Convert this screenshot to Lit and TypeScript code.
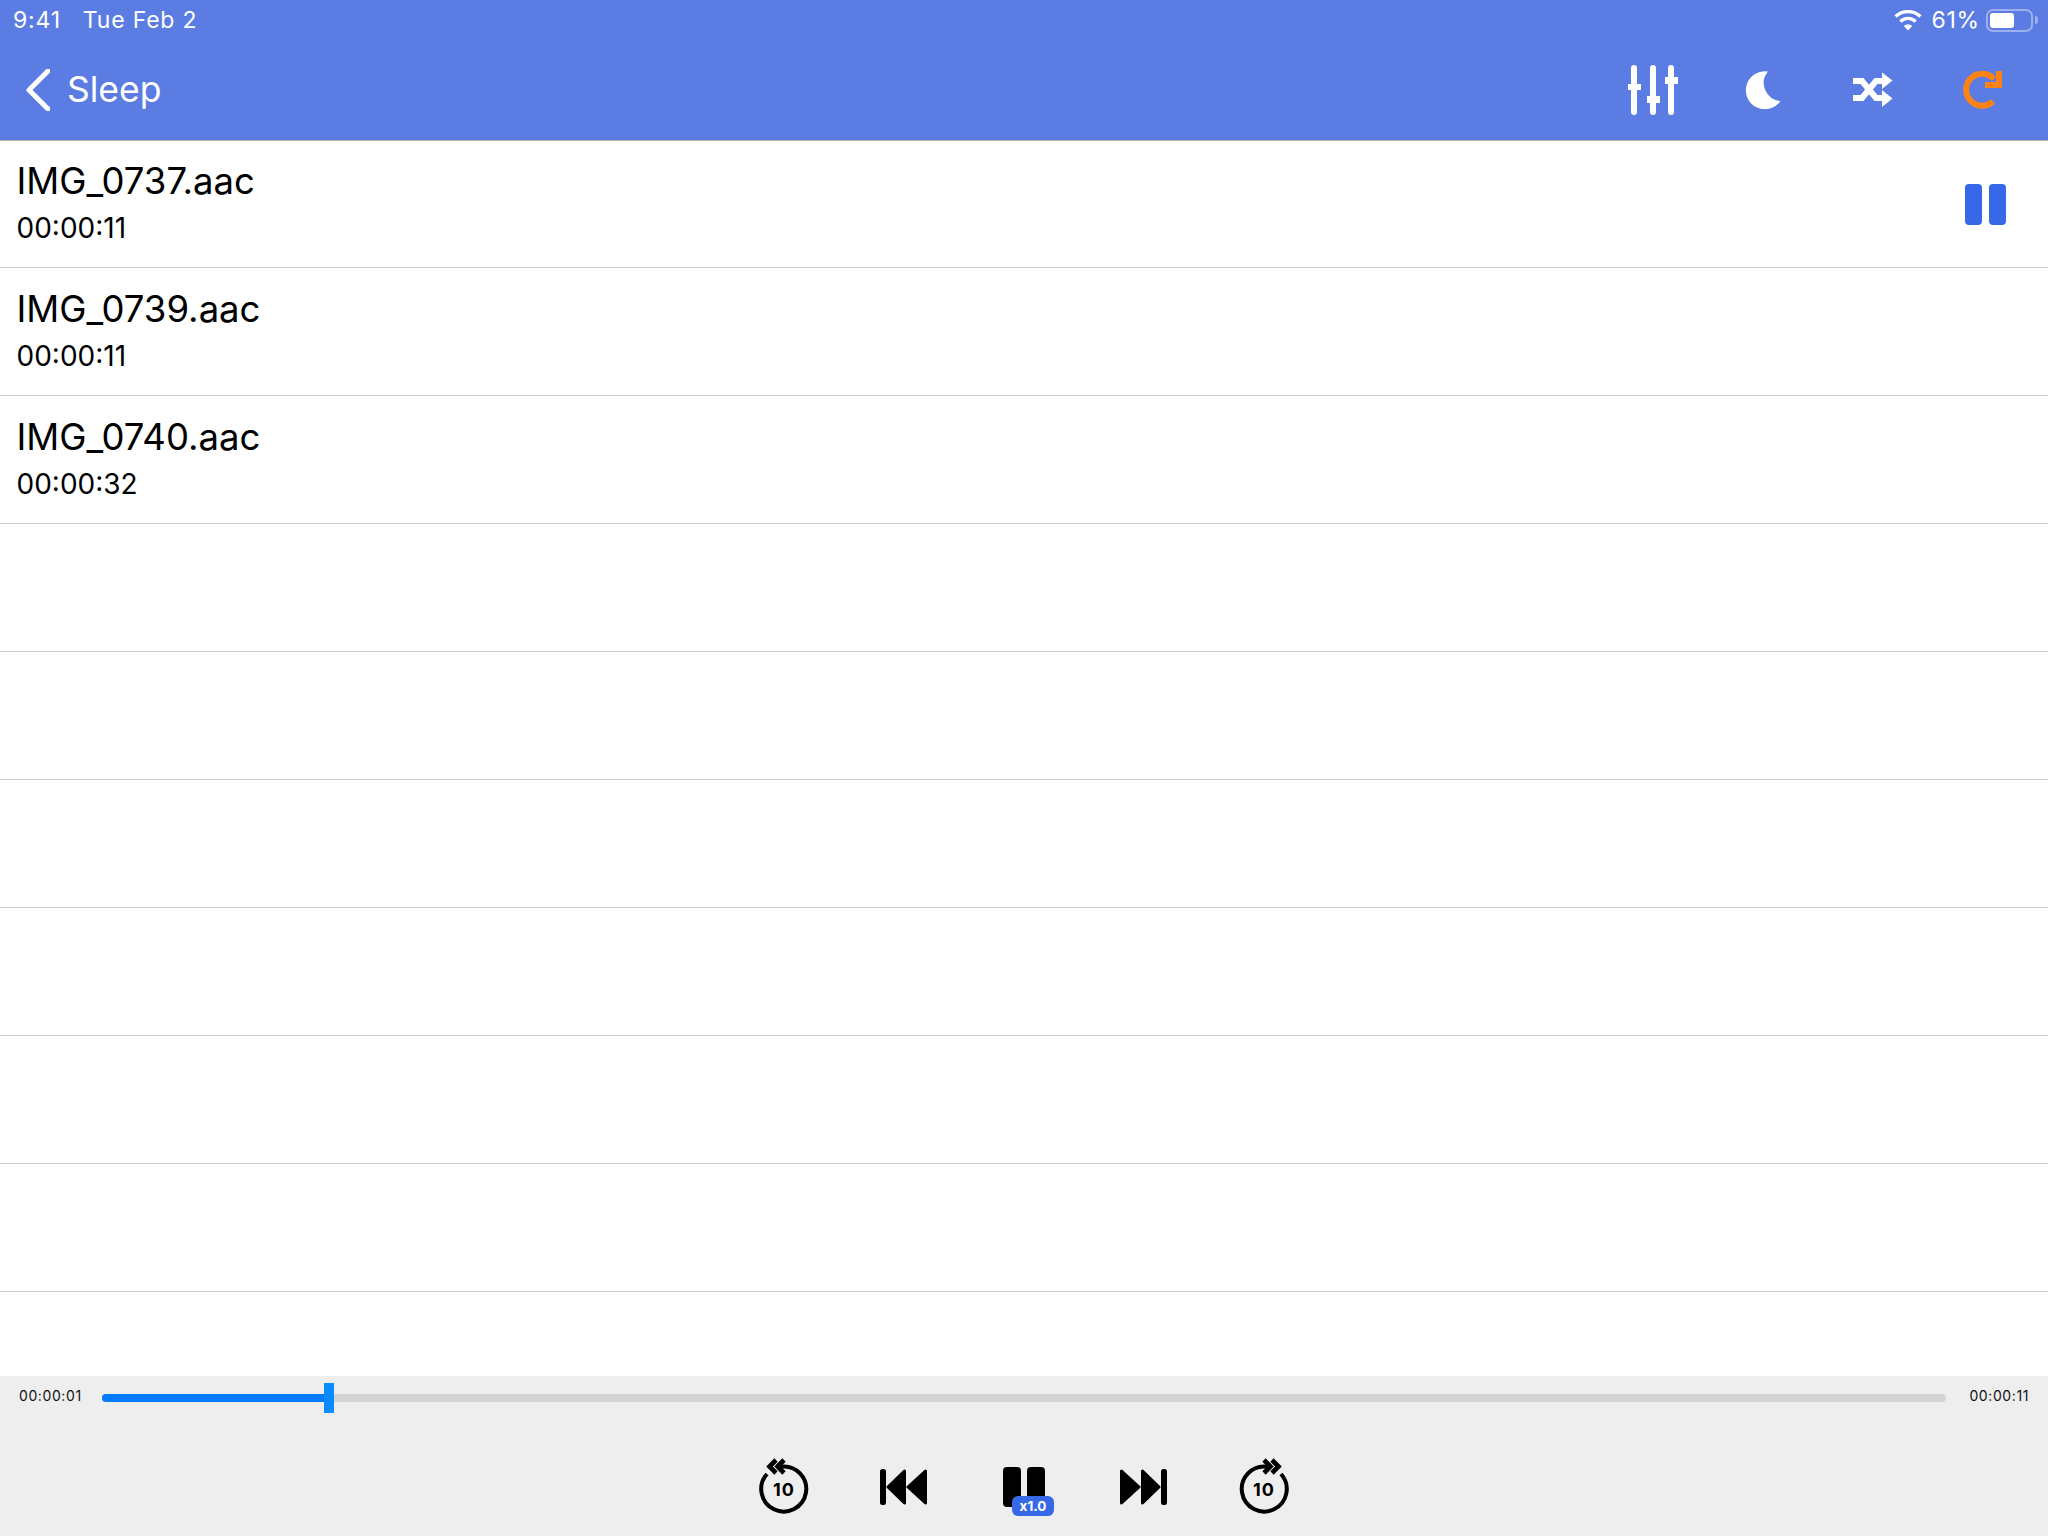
import { LitElement, html, css } from "lit";
import { customElement } from "lit/decorators.js";

const rows = [
  { name: "IMG_0737.aac", time: "00:00:11", playing: true },
  { name: "IMG_0739.aac", time: "00:00:11" },
  { name: "IMG_0740.aac", time: "00:00:32" },
  {}, {}, {}, {}, {}, {},
] as { name?: string; time?: string; playing?: boolean }[];

const replay = (forward: boolean) => html`
  <svg class="ic-replay" viewBox="0 0 60 60" width="60" height="60">
    <g transform=${forward ? "translate(60 0) scale(-1 1)" : ""} fill="none" stroke="#000" stroke-width="4">
      <path d="M27 9.7 A22.5 22.5 0 1 1 13 17"/>
      <path d="M22 3 L15.5 9.5 L22 16" stroke-width="4.6"/>
      <path d="M30 3 L23.5 9.5 L30 16" stroke-width="4.6"/>
    </g>
    <text x="30" y="39" text-anchor="middle" class="ten">10</text>
  </svg>`;

@customElement("app-root")
export class AppRoot extends LitElement {
  static styles = css`
    :host {
      display: flex; flex-direction: column; height: 1536px; width: 2048px; overflow: hidden;
      font-family: Inter, "Liberation Sans", sans-serif; background: #fff; color: #000;
    }
    .head { height: 140px; background: #5b7ce3; border-bottom: 1px solid #b4b4b4; color: #fff; flex: none; }
    .status { height: 40px; display: flex; align-items: center; padding: 0 13px; font-size: 23px; letter-spacing: .8px; }
    .status .date { margin-left: 22px; }
    .spacer { flex: 1; }
    .wifi { margin-right: 9px; }
    .batt { margin-left: 6px; margin-right: 2px; width: 47px; height: 23px; box-sizing: border-box; border: 2px solid rgba(255,255,255,.4); border-radius: 7px; padding: 2px; position: relative; }
    .batt i { display: block; width: 24px; height: 100%; background: #fff; border-radius: 3px; }
    .batt::after { content: ""; position: absolute; left: 47px; top: 5px; width: 3px; height: 8px; background: rgba(255,255,255,.4); border-radius: 0 3px 3px 0; }
    .nav { height: 100px; display: flex; align-items: center; padding-left: 26px; font-size: 35.5px; }
    .nav .label { position: relative; top: -1px; }
    .nav .back { margin-right: 17px; }
    .tools { display: flex; align-items: center; margin-right: 10px; }
    .tool { width: 110px; display: flex; justify-content: center; }
    .list { flex: 1; }
    .row { height: 128px; box-sizing: border-box; border-bottom: 1px solid #c9c9c9; display: flex; align-items: center; padding: 0 42px 0 16.5px; }
    .row:first-child { height: 127px; }
    .row .txt { flex: 1; margin-top: -3px; }
    .name { font-size: 36.5px; line-height: 44px; position: relative; top: -2px; }
    .time { font-size: 28px; line-height: 36px; margin-top: 3px; position: relative; top: 2px; }
    .pause-row { display: flex; gap: 7px; }
    .pause-row i { width: 17px; height: 41px; border-radius: 4px; background: #3668e8; display: block; }
    .player { height: 160px; background: #eeeeee; flex: none; }
    .prog { display: flex; align-items: center; height: 36px; padding: 0 19px; margin-top: 2px; font-size: 14px; letter-spacing: .6px; color: #111; }
    .prog span { width: 83px; flex: none; position: relative; top: -1px; }
    .prog span:last-child { text-align: right; width: 83px; }
    .track { flex: 1; height: 8px; background: #d4d4d6; border-radius: 4px; position: relative; top: 2px; }
    .fill { height: 100%; background: #007aff; border-radius: 4px 0 0 4px; }
    .thumb { position: absolute; top: -11px; width: 10px; height: 30px; background: #0a8bff; transform: translateX(-5px); }
    .ctrls { display: flex; justify-content: center; margin-top: 41px; height: 64px; }
    .ctrl { width: 120px; display: flex; justify-content: center; align-items: center; }
    .ctrl .fwd { margin-left: -2px; }
    .ten { font: 700 18px Inter, "Liberation Sans", sans-serif; letter-spacing: 1px; fill: #000; }
    .big-pause { position: relative; display: flex; gap: 6px; }
    .big-pause i { width: 18px; height: 40px; background: #000; border-radius: 4px; display: block; }
    .badge { position: absolute; left: 9px; top: 29px; width: 42px; height: 20px; background: #3668e8; border-radius: 6px; color: #fff; font-size: 13.5px; font-weight: 700; display: flex; align-items: center; justify-content: center; }
  `;

  render() {
    const w = 100 * (324 + 5 - 102) / 1844;
    return html`
      <div class="head">
        <div class="status">
          <span>9:41</span><span class="date">Tue Feb 2</span><span class="spacer"></span>
          <svg class="wifi" width="28" height="22" viewBox="0 0 28 22" fill="none" stroke="#fff" stroke-width="3.4">
            <path d="M1.6 7.6 A18 18 0 0 1 26.4 7.6"/>
            <path d="M6.4 12.4 A11 11 0 0 1 21.6 12.4"/>
            <path d="M14 21.5 L9.8 17 A6 6 0 0 1 18.2 17 Z" fill="#fff" stroke="none"/>
          </svg>
          <span>61%</span>
          <div class="batt"><i></i></div>
        </div>
        <div class="nav">
          <svg class="back" width="24" height="42" viewBox="0 0 24 42" fill="none" stroke="#fff" stroke-width="5" stroke-linecap="round" stroke-linejoin="round">
            <path d="M22 2 L3 21 L22 40"/>
          </svg>
          <span class="label">Sleep</span>
          <span class="spacer"></span>
          <div class="tools">
            <div class="tool">
              <svg width="50" height="50" viewBox="0 0 50 50" fill="#fff">
                <rect x="3" width="6" height="50" rx="3"/><rect x="0" y="19" width="13" height="6"/>
                <rect x="22" width="6" height="50" rx="3"/><rect x="19" y="31" width="13" height="7"/>
                <rect x="40" width="6" height="50" rx="3"/><rect x="37" y="12" width="13" height="7"/>
              </svg>
            </div>
            <div class="tool">
              <svg width="36" height="38" viewBox="0 0 36 38" fill="#fff">
                <path d="M23 .5 A19 19 0 1 0 35.5 30 A18 18 0 0 1 23 .5 Z"/>
              </svg>
            </div>
            <div class="tool">
              <svg width="40" height="36" viewBox="0 0 40 36">
                <path d="M0 9 H9 L23 26 H32 M0 26 H9 L23 9 H32" fill="none" stroke="#fff" stroke-width="6"/>
                <path d="M29 0.5 L39.5 8.5 L29 17 Z M29 18 L39.5 26.5 L29 35 Z" fill="#fff"/>
              </svg>
            </div>
            <div class="tool">
              <svg width="40" height="38" viewBox="0 0 40 38" fill="none" stroke="#ff8214" stroke-width="6">
                <path d="M31 8 A16 16 0 1 0 30 30.5"/>
                <path d="M36 0 V14 H22"/>
              </svg>
            </div>
          </div>
        </div>
      </div>
      <div class="list">
        ${rows.map(r => html`
          <div class="row">
            <div class="txt">
              ${r.name ? html`<div class="name">${r.name}</div><div class="time">${r.time}</div>` : ""}
            </div>
            ${r.playing ? html`<div class="pause-row"><i></i><i></i></div>` : ""}
          </div>`)}
      </div>
      <div class="player">
        <div class="prog">
          <span>00:00:01</span>
          <div class="track">
            <div class="fill" style="width:${w}%"></div>
            <div class="thumb" style="left:${w}%"></div>
          </div>
          <span>00:00:11</span>
        </div>
        <div class="ctrls">
          <div class="ctrl">${replay(false)}</div>
          <div class="ctrl">
            <svg width="48" height="36" viewBox="0 0 48 36" fill="#000" stroke="#000" stroke-width="3" stroke-linejoin="round">
              <rect x="1.5" y="1.5" width="3" height="33" rx="1"/>
              <path d="M8 18 L24.5 2 V34 Z"/><path d="M28 18 L45.5 2 V34 Z"/>
            </svg>
          </div>
          <div class="ctrl">
            <div class="big-pause"><i></i><i></i><div class="badge">x1.0</div></div>
          </div>
          <div class="ctrl">
            <svg class="fwd" width="48" height="36" viewBox="0 0 48 36" fill="#000" stroke="#000" stroke-width="3" stroke-linejoin="round">
              <rect x="43.5" y="1.5" width="3" height="33" rx="1"/>
              <path d="M40 18 L23.5 2 V34 Z"/><path d="M20 18 L2.5 2 V34 Z"/>
            </svg>
          </div>
          <div class="ctrl">${replay(true)}</div>
        </div>
      </div>
    `;
  }
}
